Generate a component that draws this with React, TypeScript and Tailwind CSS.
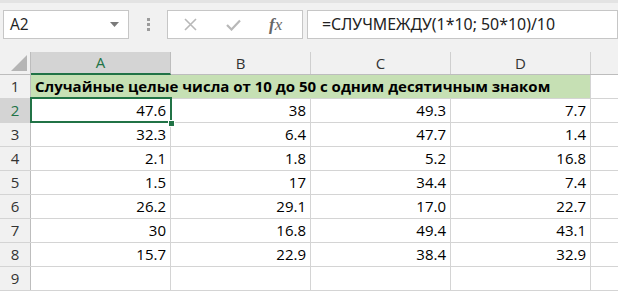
import React from "react";

const rows: (string | null)[][] = [
  ["47.6", "38", "49.3", "7.7"],
  ["32.3", "6.4", "47.7", "1.4"],
  ["2.1", "1.8", "5.2", "16.8"],
  ["1.5", "17", "34.4", "7.4"],
  ["26.2", "29.1", "17.0", "22.7"],
  ["30", "16.8", "49.4", "43.1"],
  ["15.7", "22.9", "38.4", "32.9"],
];

const font = { fontFamily: '"Open Sans", "Noto Sans", sans-serif' };

export default function App() {
  return (
    <div className="w-[618px] h-[292px] overflow-hidden bg-white relative" style={font}>
      {/* Top bar */}
      <div className="h-[52px] bg-[#f1f1f1] border-t-[3px] border-[#e3e3e3] flex items-start pt-[7px]">
        <div className="ml-[3px] w-[126px] h-[29px] bg-white border border-[#c6c6c6] flex items-center justify-between pl-[6px] pr-[9px]">
          <span className="text-[15.5px] text-[#222] leading-none">A2</span>
          <svg width="9" height="5" viewBox="0 0 9 5"><path d="M0 0H9L4.5 5Z" fill="#7a7a7a" /></svg>
        </div>
        <div className="w-[38px] h-[29px] flex flex-col items-center justify-center gap-[2px]">
          <div className="w-[3px] h-[3px] bg-[#9c9c9c]" />
          <div className="w-[3px] h-[3px] bg-[#9c9c9c]" />
          <div className="w-[3px] h-[3px] bg-[#9c9c9c]" />
        </div>
        <div className="w-[136px] h-[29px] bg-white border border-[#c6c6c6] flex items-center">
          <svg className="ml-[16px]" width="13" height="13" viewBox="0 0 13 13"><path d="M1 1L12 12M12 1L1 12" stroke="#b8b8b8" strokeWidth="1.6" /></svg>
          <svg className="ml-[29px]" width="15" height="12" viewBox="0 0 15 12"><path d="M1 6L5.5 10.5L14 1.5" stroke="#b8b8b8" strokeWidth="2.2" fill="none" /></svg>
          <span className="ml-[28px] text-[17px] italic text-[#666] leading-none" style={{ fontFamily: '"Liberation Serif", serif' }}>
            <span className="font-bold">f</span>x
          </span>
        </div>
        <div className="ml-[4px] flex-1 h-[29px] bg-white border border-[#c6c6c6] flex items-center pl-[14px]">
          <span className="text-[15.9px] text-[#222] leading-none whitespace-nowrap" style={{ fontFamily: '"Noto Sans", sans-serif' }}>=СЛУЧМЕЖДУ(1*10; 50*10)/10</span>
        </div>
      </div>

      {/* Column headers */}
      <div className="flex h-[23px] bg-[#f1f1f1] border-b border-[#bdbdbd]">
        <div className="w-[31px] shrink-0 border-r border-[#bdbdbd] relative">
          <svg className="absolute right-[3px] bottom-[3px]" width="16" height="16" viewBox="0 0 16 16"><path d="M16 0V16H0Z" fill="#b5b5b5" /></svg>
        </div>
        <div className="w-[140px] shrink-0 bg-[#d4d4d4] border-r border-[#bdbdbd] border-b-2 border-b-[#217346] -mb-px flex items-center justify-center text-[15px] text-[#217346]">A</div>
        {["B", "C", "D"].map((c) => (
          <div key={c} className="w-[140px] shrink-0 border-r border-[#cfcfcf] flex items-center justify-center text-[15px] text-[#333]">{c}</div>
        ))}
        <div className="flex-1" />
      </div>

      {/* Row 1 */}
      <div className="flex h-[24px] border-b border-[#d4d4d4]">
        <div className="w-[31px] shrink-0 bg-[#f1f1f1] border-r border-[#bdbdbd] flex items-center justify-center text-[15px] text-[#333]">1</div>
        <div className="w-[560px] shrink-0 bg-[#c6e0b4] border-r border-[#d4d4d4] flex items-center pl-[4px] text-[15px] font-bold text-black whitespace-nowrap">
          Случайные целые числа от 10 до 50 с одним десятичным знаком
        </div>
        <div className="flex-1" />
      </div>

      {rows.map((r, i) => (
        <div key={i} className="flex h-[24px] border-b border-[#d4d4d4]">
          <div className={`w-[31px] shrink-0 border-r border-[#bdbdbd] flex items-center justify-center text-[15px] ${i === 0 ? "bg-[#d4d4d4] text-[#217346]" : "bg-[#f1f1f1] text-[#333]"}`}>{i + 2}</div>
          {r.map((v, j) => (
            <div key={j} className="w-[140px] shrink-0 border-r border-[#d4d4d4] flex items-center justify-end pr-[4px] text-[15px] text-black">{v}</div>
          ))}
          <div className="flex-1" />
        </div>
      ))}

      {/* Row 9 */}
      <div className="flex h-[24px] border-b border-[#d4d4d4]">
        <div className="w-[31px] shrink-0 bg-[#f1f1f1] border-r border-[#bdbdbd] flex items-center justify-center text-[15px] text-[#333]">9</div>
        {[0, 1, 2, 3].map((j) => (
          <div key={j} className="w-[140px] shrink-0 border-r border-[#d4d4d4]" />
        ))}
        <div className="flex-1" />
      </div>

      {/* Selection overlay on A2 */}
      <div className="absolute left-[30px] top-[97px] w-[142px] h-[26px] border-2 border-[#217346] pointer-events-none" />
      <div className="absolute left-[168px] top-[120px] w-[7px] h-[7px] bg-[#217346] border border-white pointer-events-none" />
    </div>
  );
}
